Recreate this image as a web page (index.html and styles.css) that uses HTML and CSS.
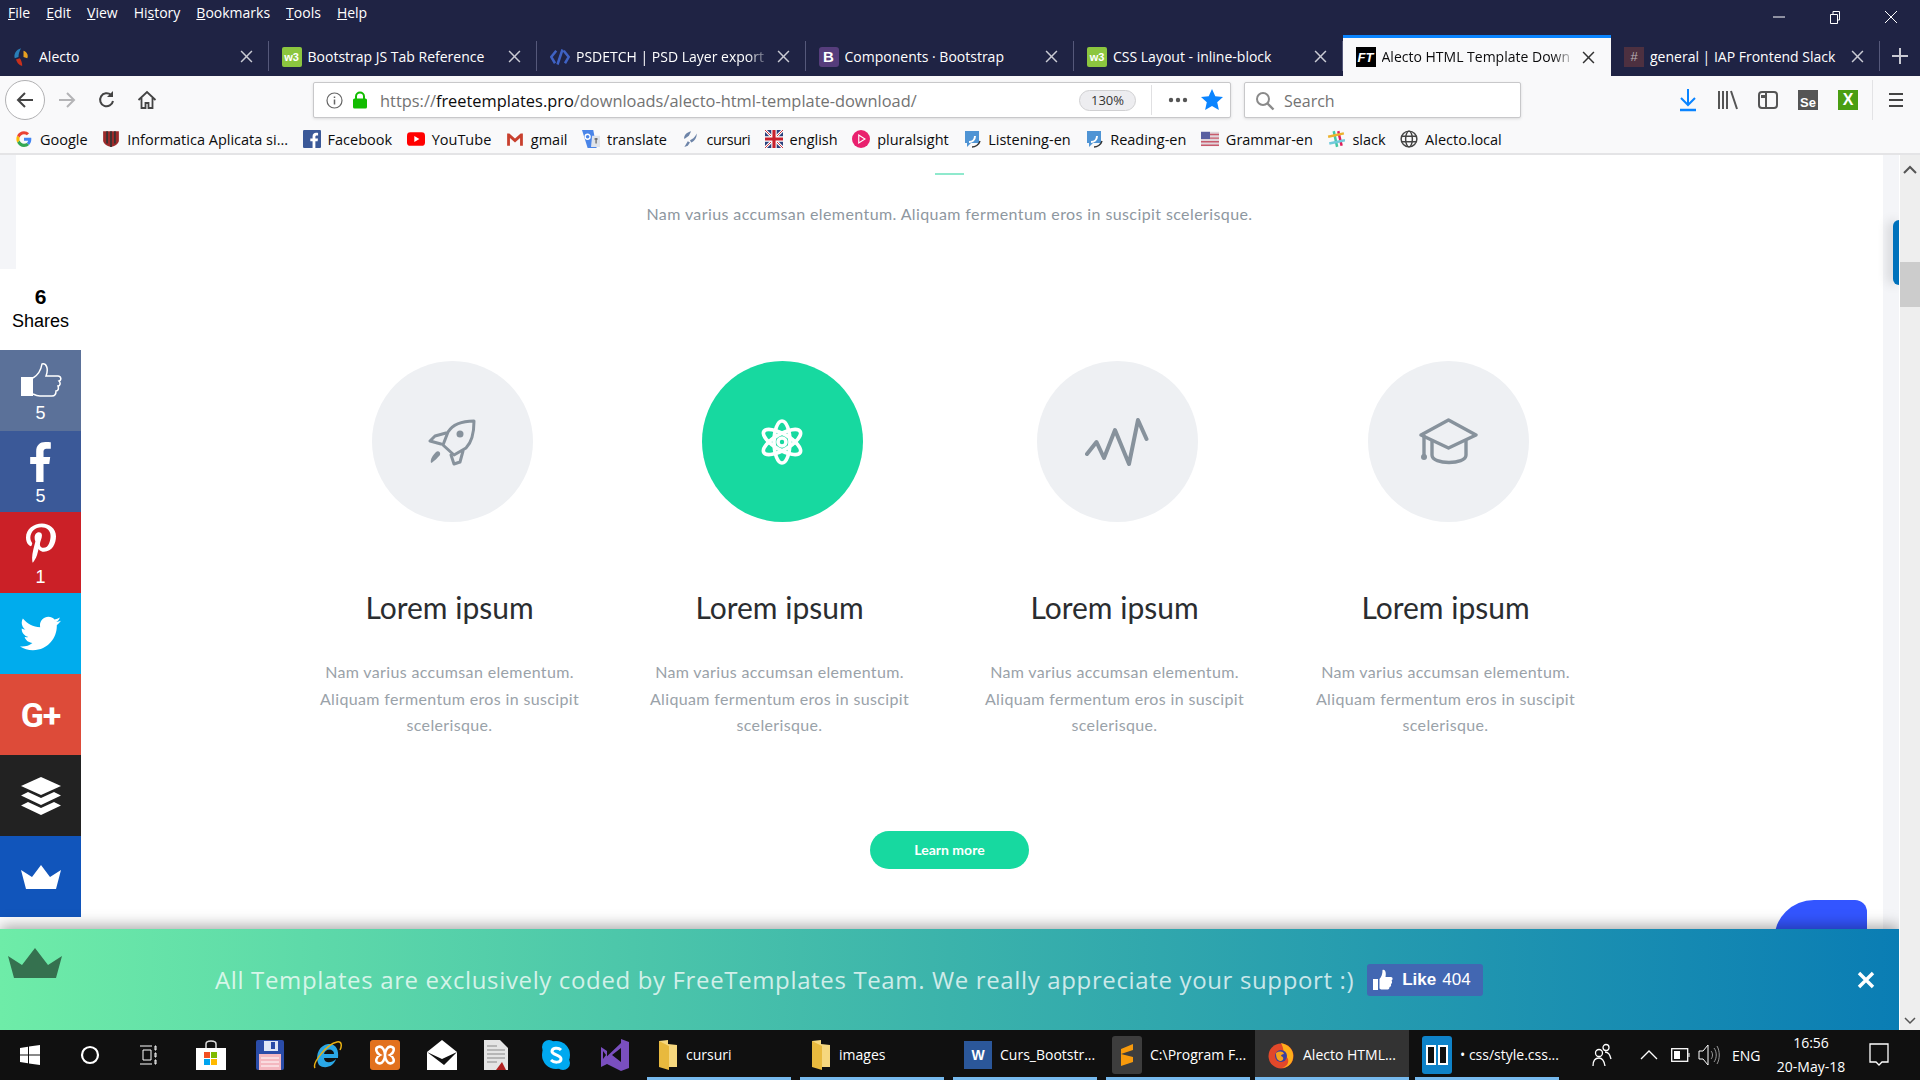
FILE: index.html
```html
<!DOCTYPE html>
<html lang="en">
<head>
    <meta charset="UTF-8">
    <title>Alecto HTML Template Download</title>
    <link rel="stylesheet" href="styles.css">
</head>
<body>
    <svg class="defs" width="0" height="0">
        <symbol id="x-icon" viewBox="0 0 12 12"><path d="M1 1l10 10M11 1L1 11" fill="none" stroke="currentColor" stroke-width="1.4"/></symbol>
        <symbol id="speech" viewBox="0 0 18 18"><path d="M2 1h14v12H8l-4 4v-4H2z" fill="#4f94d4"/><path d="M6 12c3 0 6-2 6-6" stroke="#fff" stroke-width="2" fill="none"/><path d="M9 17c3 0 7-2 8-6" stroke="#333" stroke-width="1.4" fill="none"/></symbol>
    </svg>

    <!-- menu bar -->
    <div class="menubar">
        <span class="menu-item"><u>F</u>ile</span>
        <span class="menu-item"><u>E</u>dit</span>
        <span class="menu-item"><u>V</u>iew</span>
        <span class="menu-item">Hi<u>s</u>tory</span>
        <span class="menu-item"><u>B</u>ookmarks</span>
        <span class="menu-item"><u>T</u>ools</span>
        <span class="menu-item"><u>H</u>elp</span>
        <div class="window-controls">
            <svg width="14" height="14" viewBox="0 0 14 14"><path d="M1 7h12" stroke="#fff"/></svg>
            <svg width="14" height="14" viewBox="0 0 14 14"><path d="M2.500 4.500h7v9h-7zM5 4V1.500h6.500V10H10" fill="none" stroke="#fff"/></svg>
            <svg width="14" height="14" viewBox="0 0 14 14"><path d="M1 1l12 12M13 1L1 13" stroke="#fff"/></svg>
        </div>
    </div>

    <!-- tabs -->
    <div class="tabstrip">
        <div class="tab">
            <svg class="favicon" viewBox="0 0 16 16"><path d="M8 1C4 2 2 6 3 9l3-1c0-3 1-5 2-7z" fill="#2a7fb8"/><path d="M10 3c3 1 4 4 3 6l-3-1c0-2 0-3 0-5z" fill="#e8a020"/><path d="M4 10c1 3 3 5 5 5 0-2-1-5-2-6z" fill="#c8301c"/></svg>
            <span class="tab-title">Alecto</span>
            <svg class="tab-close"><use href="#x-icon"/></svg>
        </div>
        <div class="tab">
            <span class="favicon favicon-w3">w3</span>
            <span class="tab-title">Bootstrap JS Tab Reference</span>
            <svg class="tab-close"><use href="#x-icon"/></svg>
        </div>
        <div class="tab">
            <svg class="favicon" viewBox="0 0 16 16"><path d="M5 3L1 8l3 5M11 3l4 5-3 5M10 2L6 14" fill="none" stroke="#3f62c4" stroke-width="2"/></svg>
            <span class="tab-title tab-title-fade">PSDETCH | PSD Layer export</span>
            <svg class="tab-close"><use href="#x-icon"/></svg>
        </div>
        <div class="tab">
            <span class="favicon favicon-b">B</span>
            <span class="tab-title">Components · Bootstrap</span>
            <svg class="tab-close"><use href="#x-icon"/></svg>
        </div>
        <div class="tab">
            <span class="favicon favicon-w3">w3</span>
            <span class="tab-title">CSS Layout - inline-block</span>
            <svg class="tab-close"><use href="#x-icon"/></svg>
        </div>
        <div class="tab tab-active">
            <span class="favicon favicon-ft">FT</span>
            <span class="tab-title tab-title-fade">Alecto HTML Template Down</span>
            <svg class="tab-close"><use href="#x-icon"/></svg>
        </div>
        <div class="tab">
            <span class="favicon favicon-hash">#</span>
            <span class="tab-title">general | IAP Frontend Slack</span>
            <svg class="tab-close"><use href="#x-icon"/></svg>
        </div>
        <div class="tab-new">
            <svg width="18" height="18" viewBox="0 0 18 18"><path d="M9 1v16M1 9h16" stroke="#c9cad3" stroke-width="2"/></svg>
        </div>
    </div>

    <!-- navigation toolbar -->
    <div class="toolbar">
        <div class="nav-btn nav-back">
            <svg width="20" height="20" viewBox="0 0 20 20"><path d="M18 10H3M10 3l-7 7 7 7" fill="none" stroke="#444" stroke-width="2"/></svg>
        </div>
        <div class="nav-btn">
            <svg width="20" height="20" viewBox="0 0 20 20"><path d="M2 10h15M10 3l7 7-7 7" fill="none" stroke="#b4b4b6" stroke-width="2"/></svg>
        </div>
        <div class="nav-btn">
            <svg width="20" height="20" viewBox="0 0 20 20"><path d="M16 11a6.500 6.500 0 1 1-2-6" fill="none" stroke="#444" stroke-width="2"/><path d="M16 1v6h-6z" fill="#444"/></svg>
        </div>
        <div class="nav-btn">
            <svg width="20" height="20" viewBox="0 0 20 20"><path d="M1.500 10L10 2l8.500 8M4.500 8v10h4v-5h3v5h4V8" fill="none" stroke="#444" stroke-width="1.800"/></svg>
        </div>

        <div class="urlbar">
            <svg class="url-info" width="17" height="17" viewBox="0 0 17 17"><circle cx="8.500" cy="8.500" r="7.500" fill="none" stroke="#666" stroke-width="1.200"/><path d="M8.500 7.500v5M8.500 4.500v1.500" stroke="#666" stroke-width="1.500"/></svg>
            <svg class="url-lock" width="16" height="18" viewBox="0 0 16 18"><path d="M4 8V5.500a4 4 0 0 1 8 0V8" fill="none" stroke="#12bc00" stroke-width="2"/><rect x="1" y="7.500" width="14" height="10" rx="1.500" fill="#12bc00"/></svg>
            <span class="url-text"><span class="url-dim">https://</span>freetemplates.pro<span class="url-dim">/downloads/alecto-html-template-download/</span></span>
            <span class="zoom-pill">130%</span>
            <span class="url-sep"></span>
            <svg class="url-dots" width="20" height="6" viewBox="0 0 20 6"><circle cx="3" cy="3" r="2.200" fill="#555"/><circle cx="10" cy="3" r="2.200" fill="#555"/><circle cx="17" cy="3" r="2.200" fill="#555"/></svg>
            <svg class="url-star" width="24" height="24" viewBox="0 0 24 24"><path d="M12 1l3.300 7.300 7.700.8-5.800 5.200 1.700 7.800-6.900-4-6.900 4 1.700-7.800L1 9.100l7.700-.8z" fill="#0a84ff"/></svg>
        </div>

        <div class="searchbar">
            <svg width="20" height="20" viewBox="0 0 20 20"><circle cx="8" cy="8" r="6" fill="none" stroke="#8a8a8a" stroke-width="2"/><path d="M12.500 12.500l6 6" stroke="#8a8a8a" stroke-width="2.400"/></svg>
            <span>Search</span>
        </div>

        <div class="tool-icons">
            <div class="nav-btn"><svg width="20" height="24" viewBox="0 0 20 24"><path d="M10 1v15M3 10l7 7 7-7" fill="none" stroke="#0a84ff" stroke-width="2"/><path d="M2 22h16" stroke="#0a84ff" stroke-width="2.500"/></svg></div>
            <div class="nav-btn"><svg width="22" height="20" viewBox="0 0 22 20"><path d="M2 1v18M6 1v18M10 1v18M14 1l6 18" fill="none" stroke="#555" stroke-width="2"/></svg></div>
            <div class="nav-btn"><svg width="20" height="20" viewBox="0 0 20 20"><rect x="1" y="2" width="18" height="16" rx="3" fill="none" stroke="#555" stroke-width="2"/><path d="M8 2v16" stroke="#555" stroke-width="2"/><path d="M3 5h4v3H3z" fill="#555"/></svg></div>
            <div class="nav-btn"><span class="ext-icon ext-se">Se</span></div>
            <div class="nav-btn"><span class="ext-icon ext-x">X</span></div>
            <span class="tool-sep"></span>
            <div class="nav-btn"><svg width="18" height="18" viewBox="0 0 18 18"><path d="M2 3h14M2 9h14M2 15h14" stroke="#444" stroke-width="2"/></svg></div>
        </div>
    </div>

    <!-- bookmarks -->
    <div class="bookmarks">
        <span class="bookmark">
            <svg viewBox="0 0 16 16"><path d="M14.500 8.200c0-.5 0-1-.1-1.400H8v2.700h3.700c-.2.9-.6 1.600-1.300 2.100l2.100 1.700c1.200-1.200 2-2.900 2-5.100z" fill="#4285f4"/><path d="M8 15c1.800 0 3.400-.6 4.500-1.700l-2.100-1.700c-.6.400-1.400.7-2.400.7-1.800 0-3.300-1.200-3.900-2.900L1.900 11c1.100 2.400 3.400 4 6.100 4z" fill="#34a853"/><path d="M4.100 9.400C3.900 8.600 3.900 7.400 4.100 6.600L1.900 4.900c-.9 1.900-.9 4.200 0 6.100z" fill="#fbbc05"/><path d="M8 3.700c1 0 1.900.4 2.600 1l1.900-1.900C11.300 1.700 9.800 1 8 1 5.300 1 3 2.600 1.900 4.900l2.200 1.700C4.700 4.900 6.200 3.700 8 3.700z" fill="#ea4335"/></svg>
            Google
        </span>
        <span class="bookmark">
            <svg viewBox="0 0 16 16"><path d="M1 1h14v8c0 3-3 5-7 6-4-1-7-3-7-6z" fill="#9c2a2a"/><path d="M4.500 1v11M8 1v14M11.500 1v11" stroke="#333" stroke-width="1.500"/></svg>
            Informatica Aplicata si...
        </span>
        <span class="bookmark">
            <svg viewBox="0 0 16 16"><rect width="16" height="16" rx="1" fill="#3b5998"/><path d="M11 16v-6h2l.3-2.500H11V6c0-.7.3-1.200 1.200-1.200h1.200V2.600C13 2.500 12.300 2.500 11.600 2.500 9.800 2.500 8.500 3.600 8.500 5.700v1.800h-2V10h2v6z" fill="#fff"/></svg>
            Facebook
        </span>
        <span class="bookmark">
            <svg viewBox="0 0 16 16"><rect y="2" width="16" height="12" rx="3" fill="#f00"/><path d="M6.500 5.300v5.400L11 8z" fill="#fff"/></svg>
            YouTube
        </span>
        <span class="bookmark">
            <svg viewBox="0 0 16 16"><path d="M1 3h2l5 4.500L13 3h2v11h-2.500V7L8 11 3.500 7v7H1z" fill="#c8402e"/></svg>
            gmail
        </span>
        <span class="bookmark">
            <svg viewBox="0 0 16 16"><path d="M0 0h10l3 16H5z" fill="#4a85e8"/><path d="M9 5h7v10H8z" fill="#dfe3ea"/><circle cx="5" cy="6" r="2.200" fill="none" stroke="#fff" stroke-width="1.200"/><path d="M11 8h3M12.500 7v5" stroke="#555"/></svg>
            translate
        </span>
        <span class="bookmark bookmark-tight">
            <svg viewBox="0 0 16 16"><path d="M9 1C5 2 2 5 3 8l4-3zM14 3c-2 4-4 5-6 6l1 2c3-1 5-4 5-8zM6 10l-3 5 3-1 2-3z" fill="#6d84a8"/></svg>
            cursuri
        </span>
        <span class="bookmark">
            <svg viewBox="0 0 20 20"><rect width="20" height="20" fill="#2a3f7c"/><path d="M0 0l20 20M20 0L0 20" stroke="#fff" stroke-width="3"/><path d="M0 0l20 20M20 0L0 20" stroke="#c8202c"/><path d="M10 0v20M0 10h20" stroke="#fff" stroke-width="6"/><path d="M10 0v20M0 10h20" stroke="#c8202c" stroke-width="3.500"/></svg>
            english
        </span>
        <span class="bookmark">
            <svg viewBox="0 0 16 16"><circle cx="8" cy="8" r="8" fill="#e9206e"/><path d="M6 4.500v7L11.500 8z" fill="none" stroke="#fff"/></svg>
            pluralsight
        </span>
        <span class="bookmark">
            <svg><use href="#speech"/></svg>
            Listening-en
        </span>
        <span class="bookmark">
            <svg><use href="#speech"/></svg>
            Reading-en
        </span>
        <span class="bookmark">
            <svg viewBox="0 0 20 16"><rect width="20" height="16" fill="#e0d4da"/><path d="M0 3h20M0 7h20M0 11h20M0 15h20" stroke="#c85a6c" stroke-width="1.600"/><rect width="10" height="8" fill="#5a5fa0"/></svg>
            Grammar-en
        </span>
        <span class="bookmark">
            <svg viewBox="0 0 16 16"><path d="M6 1l3 14" stroke="#44c7a4" stroke-width="2.200"/><path d="M10 1l3 13" stroke="#e01e5a" stroke-width="2.200"/><path d="M1 6l14-3" stroke="#ecb22e" stroke-width="2.200"/><path d="M2 12l14-3" stroke="#70cadb" stroke-width="2.200"/></svg>
            slack
        </span>
        <span class="bookmark">
            <svg viewBox="0 0 16 16"><g fill="none" stroke="#444" stroke-width="1.300"><circle cx="8" cy="8" r="7"/><ellipse cx="8" cy="8" rx="3" ry="7"/><path d="M1.500 5.500h13M1.500 10.500h13"/></g></svg>
            Alecto.local
        </span>
    </div>

    <div class="viewport">
        <div class="page">
            <div class="content">
                <div class="rule"></div>
                <p class="subtitle">Nam varius accumsan elementum. Aliquam fermentum eros in suscipit scelerisque.</p>

                <div class="features">
                    <div class="feature">
                        <div class="feature-icon">
                            <svg width="48" height="48" viewBox="0 0 48 48"><g fill="none" stroke="#87929c" stroke-width="3" stroke-linejoin="round" stroke-linecap="round"><path d="M46 3c0 13-2 21-8 27l-12 7-11-10 5-13C25 6 34 3 46 3z"/><path d="M18 15L7 18l-5 5 11 3"/><path d="M35 33l-3 11-6 2-3-9"/></g><circle cx="32" cy="16" r="3.500" fill="#87929c"/><path d="M8 34c2-2 5 0 4 3-2 2-6 7-9 8-1-4 2-8 5-11z" fill="#87929c"/></svg>
                        </div>
                        <h3 class="feature-title">Lorem ipsum</h3>
                        <p class="feature-text">Nam varius accumsan elementum. Aliquam fermentum eros in suscipit scelerisque.</p>
                    </div>
                    <div class="feature">
                        <div class="feature-icon feature-icon-active">
                            <svg width="48" height="48" viewBox="0 0 48 48"><g fill="none" stroke="#fff" stroke-width="3.600"><ellipse cx="24" cy="24" rx="8" ry="21"/><ellipse cx="24" cy="24" rx="8" ry="21" transform="rotate(60 24 24)"/><ellipse cx="24" cy="24" rx="8" ry="21" transform="rotate(120 24 24)"/><circle cx="24" cy="24" r="4"/></g></svg>
                        </div>
                        <h3 class="feature-title">Lorem ipsum</h3>
                        <p class="feature-text">Nam varius accumsan elementum. Aliquam fermentum eros in suscipit scelerisque.</p>
                    </div>
                    <div class="feature">
                        <div class="feature-icon">
                            <svg width="64" height="48" viewBox="0 0 64 48"><path d="M2 36l9.500-12L19 40l11-28 14 34 9-44 8.500 19" fill="none" stroke="#87929c" stroke-width="4" stroke-linejoin="round" stroke-linecap="round"/></svg>
                        </div>
                        <h3 class="feature-title">Lorem ipsum</h3>
                        <p class="feature-text">Nam varius accumsan elementum. Aliquam fermentum eros in suscipit scelerisque.</p>
                    </div>
                    <div class="feature">
                        <div class="feature-icon">
                            <svg width="60" height="48" viewBox="0 0 60 48"><g fill="none" stroke="#87929c" stroke-width="3.400" stroke-linejoin="round" stroke-linecap="round"><path d="M30.500 2L58 17 30.500 30 3 17z"/><path d="M14 23v14c0 10 34 10 34 0V23"/><path d="M6 18v19"/></g><circle cx="6" cy="39" r="3" fill="#87929c"/></svg>
                        </div>
                        <h3 class="feature-title">Lorem ipsum</h3>
                        <p class="feature-text">Nam varius accumsan elementum. Aliquam fermentum eros in suscipit scelerisque.</p>
                    </div>
                </div>

                <a class="learn-more">Learn more</a>
            </div>

            <!-- things fixed over the page -->
            <div class="edge-strip"></div>
            <div class="corner-strip"></div>
            <div class="edge-tab"></div>
            <div class="chat-blob"></div>

            <div class="share-bar">
                <div class="share-total"><b>6</b><span>Shares</span></div>
                <div class="share share-like">
                    <svg width="42" height="36" viewBox="0 0 42 36"><path d="M1 15h12v19H1z" fill="#fff"/><path d="M13 16c5-3 8-8 9-14 4-1 7 4 4 12h12c3 0 4 4 1 5 2 2 1 5-1 5 1 3 0 5-2 5 0 3-1 5-4 5H20c-3 0-5-1-7-2" fill="none" stroke="#fff" stroke-width="1.500"/></svg>
                    <span class="share-count">5</span>
                </div>
                <div class="share share-fb">
                    <svg width="21" height="40" viewBox="0 0 264 512"><path d="M76.700 512V283H0v-91h76.700v-71.700C76.700 42.400 124.300 0 193.800 0c33.300 0 61.900 2.500 70.200 3.600V85h-48.200c-37.800 0-45.100 18-45.100 44.300V192H256l-11.700 91h-73.600v229" fill="#fff"/></svg>
                    <span class="share-count">5</span>
                </div>
                <div class="share share-pin">
                    <svg width="32" height="40" viewBox="0 0 384 512"><path d="M204 6.500C101.400 6.500 0 74.900 0 185.600 0 256 39.600 296 63.600 296c9.900 0 15.600-27.600 15.600-35.400 0-9.300-23.700-29.100-23.700-67.800 0-80.400 61.200-137.400 140.400-137.400 68.100 0 118.500 38.700 118.500 109.800 0 53.100-21.300 152.700-90.300 152.700-24.900 0-46.200-18-46.200-43.800 0-37.800 26.400-74.400 26.400-113.400 0-66.200-93.900-54.200-93.900 25.800 0 16.800 2.100 35.400 9.600 50.700-13.800 59.400-42 147.900-42 209.100 0 18.900 2.700 37.500 4.500 56.400 3.400 3.800 1.700 3.400 6.900 1.500 50.400-69 48.600-82.500 71.400-172.800 12.300 23.400 44.100 36 69.300 36 106.200 0 153.900-103.500 153.900-196.800C384 71.300 298.200 6.500 204 6.500z" fill="#fff"/></svg>
                    <span class="share-count">1</span>
                </div>
                <div class="share share-tw share-plain">
                    <svg width="41" height="41" viewBox="0 0 512 512"><path d="M459.370 151.716c.325 4.548.325 9.097.325 13.645 0 138.720-105.583 298.558-298.558 298.558-59.452 0-114.680-17.219-161.137-47.106 8.447.974 16.568 1.299 25.340 1.299 49.055 0 94.213-16.568 130.274-44.832-46.132-.975-84.792-31.188-98.112-72.772 6.498.974 12.995 1.624 19.818 1.624 9.421 0 18.843-1.300 27.614-3.573-48.081-9.747-84.143-51.980-84.143-102.985v-1.299c13.969 7.797 30.214 12.670 47.431 13.319-28.264-18.843-46.781-51.005-46.781-87.391 0-19.492 5.197-37.360 14.294-52.954 51.655 63.675 129.300 105.258 216.365 109.807-1.624-7.797-2.599-15.918-2.599-24.040 0-57.828 46.782-104.934 104.934-104.934 30.213 0 57.502 12.670 76.670 33.137 23.715-4.548 46.456-13.320 66.599-25.340-7.798 24.366-24.366 44.833-46.132 57.827 21.117-2.273 41.584-8.122 60.426-16.243-14.292 20.791-32.161 39.308-52.628 54.253z" fill="#fff"/></svg>
                </div>
                <div class="share share-gp share-plain"><span class="gp-text">G+</span></div>
                <div class="share share-buffer share-plain">
                    <svg width="42" height="42" viewBox="0 0 42 42"><path d="M21 2l20 9-20 9-20-9z" fill="#fff"/><path d="M8 17l13 6 13-6 7 3.500L21 30 1 20.500z" fill="#fff"/><path d="M8 27l13 6 13-6 7 3.500L21 40 1 30.500z" fill="#fff"/></svg>
                </div>
                <div class="share share-crown share-plain">
                    <svg width="40" height="24" viewBox="0 0 40 24"><path d="M0 5l11 7L20 0l9 12 11-7-5 19H5z" fill="#fff"/></svg>
                </div>
            </div>

            <div class="banner">
                <svg class="banner-crown" width="54" height="30" viewBox="0 0 54 30"><path d="M0 8l14 9L27 0l13 17 14-9-6 22H6z" fill="#35714f"/></svg>
                <span class="banner-text">All Templates are exclusively coded by FreeTemplates Team. We really appreciate your support :)</span>
                <span class="like-btn">
                    <svg width="20" height="22" viewBox="0 0 20 22"><path d="M0 10h5v11H0zM6.500 10c2-2 3-5 3-9 2.500-1 4 2 3 7H18c2 0 2 3 .5 3.500 1 1.500.5 3-.5 3.500.5 2-.5 3-1.500 3 0 2-1 2.500-2.500 2.500H9c-1 0-2-.5-2.500-1z" fill="#fff"/></svg>
                    <b>Like</b> 404
                </span>
                <svg class="banner-close" width="18" height="18" viewBox="0 0 18 18"><path d="M2 2l14 14M16 2L2 16" stroke="#fff" stroke-width="3.400"/></svg>
            </div>
        </div>

        <div class="scrollbar">
            <svg width="14" height="9" viewBox="0 0 14 9"><path d="M1 8l6-6 6 6" fill="none" stroke="#555" stroke-width="2"/></svg>
            <div class="scroll-thumb"></div>
            <svg class="scroll-down" width="12" height="8" viewBox="0 0 12 8"><path d="M1 1l5 5 5-5" fill="none" stroke="#555" stroke-width="1.500"/></svg>
        </div>
    </div>

    <!-- windows taskbar -->
    <div class="taskbar">
        <div class="pinned">
            <div class="pin"><svg width="20" height="20" viewBox="0 0 20 20"><path d="M0 3l8-1.200V9.500H0zM9 1.600L20 0v9.500H9zM0 10.500h8v7.700L0 17zM9 10.500h11V20L9 18.400z" fill="#fff"/></svg></div>
            <div class="pin"><svg width="20" height="20" viewBox="0 0 20 20"><circle cx="10" cy="10" r="8" fill="none" stroke="#fff" stroke-width="2.200"/></svg></div>
            <div class="pin"><svg width="20" height="20" viewBox="0 0 20 20"><path d="M0 1h12M0 19h12M3 5h8v10H3zM15 1h1v4h-1zM15 8h1v4h-1zM15 15h1v4h-1z" fill="none" stroke="#fff"/></svg></div>
            <div class="pin"><svg width="30" height="30" viewBox="0 0 30 30"><path d="M10 8V4c0-4 10-4 10 0v4" fill="none" stroke="#ddd" stroke-width="1.500"/><rect y="8" width="30" height="22" fill="#fff"/><rect x="8" y="12" width="6" height="6" fill="#f25022"/><rect x="15" y="12" width="6" height="6" fill="#7fba00"/><rect x="8" y="19" width="6" height="6" fill="#00a4ef"/><rect x="15" y="19" width="6" height="6" fill="#ffb900"/></svg></div>
            <div class="pin"><svg width="28" height="30" viewBox="0 0 28 30"><rect width="28" height="30" rx="2" fill="#2a4ca8"/><rect x="8" y="1" width="14" height="10" fill="#dfe6f5"/><rect x="15" y="2" width="4" height="7" fill="#2a4ca8"/><rect x="3" y="14" width="22" height="16" fill="#f4b8c0"/><path d="M5 18h18M5 22h18M5 26h18" stroke="#fff"/></svg></div>
            <div class="pin"><svg width="30" height="32" viewBox="0 0 30 32"><path d="M5 24c-3-9 2-18 10-19 8-1 11 6 10 14H11c0 5 7 6 12 1-2 7-11 11-17 6" fill="#2aa7e6"/><path d="M11 15h10c0-6-9-6-10 0z" fill="#101010"/><path d="M2 29C-1 24 14 5 24 3c5-1 5 4 3 8" fill="none" stroke="#e8b013" stroke-width="1.500"/></svg></div>
            <div class="pin"><svg width="30" height="30" viewBox="0 0 30 30"><rect width="30" height="30" rx="3" fill="#e2711d"/><path d="M8 7c5-2 7 5 7 8s-2 10-7 8c-3-1-2-6 2-8-4-2-5-7-2-8zM22 7c-5-2-7 5-7 8s2 10 7 8c3-1 2-6-2-8 4-2 5-7 2-8z" fill="none" stroke="#fff" stroke-width="2.500"/></svg></div>
            <div class="pin"><svg width="30" height="30" viewBox="0 0 30 30"><path d="M0 12L15 0l15 12v18H0z" fill="#fff"/><path d="M0 12l15 7 15-7-13 13z" fill="#101010"/></svg></div>
            <div class="pin"><svg width="24" height="30" viewBox="0 0 24 30"><path d="M0 0h16l8 8v22H0z" fill="#e4e4e4"/><path d="M3 6h10M3 10h18M3 14h18M3 18h18M3 22h10" stroke="#888"/><path d="M12 30l6-8 4 8z" fill="#b02020"/></svg></div>
            <div class="pin"><svg width="30" height="32" viewBox="0 0 30 32"><circle cx="15" cy="16" r="14" fill="#00a9f0"/><circle cx="8" cy="8" r="7" fill="#00a9f0"/><circle cx="22" cy="24" r="7" fill="#00a9f0"/><path d="M20 11c-3-3-9-2-9 1.500S20 16 20 20s-7 4-10 1" fill="none" stroke="#fff" stroke-width="3"/></svg></div>
            <div class="pin"><svg width="30" height="32" viewBox="0 0 30 32"><path d="M22 0l8 3v26l-8 3-14-7-6 3V23l20-19z" fill="#7a4fbf"/><path d="M22 9v14l-9-7zM2 11l6 5-6 5z" fill="#101010"/><path d="M2 8l6 4v8l-6 4z" fill="#7a4fbf"/><path d="M4 12l3 4-3 4z" fill="#101010"/></svg></div>
        </div>

        <div class="apps">
            <div class="app"><svg width="20" height="30" viewBox="0 0 20 30"><path d="M1 1l9-1v4l9 1v22H1z" fill="#f6d77e"/><path d="M1 1l10 5v24L1 27z" fill="#e8b93e"/></svg><span>cursuri</span></div>
            <div class="app"><svg width="20" height="30" viewBox="0 0 20 30"><path d="M1 1l9-1v4l9 1v22H1z" fill="#f6d77e"/><path d="M1 1l10 5v24L1 27z" fill="#e8b93e"/></svg><span>images</span></div>
            <div class="app"><span class="app-word">W</span><span>Curs_Bootstr...</span></div>
            <div class="app app-narrow"><span class="app-sublime"><svg width="14" height="24" viewBox="0 0 14 24"><path d="M13 1v6L1 11V6zM1 11l12 3v5L1 23v-6z" fill="#f79a0c"/></svg></span><span>C:\Program F...</span></div>
            <div class="app app-active"><svg width="28" height="28" viewBox="0 0 28 28"><circle cx="14" cy="15" r="12.500" fill="#e2482a"/><path d="M14 2c9 2 13 8 12 15-1 7-7 10-12 10 6-1 8-5 7-9-1-3-4-4-6-3 3-3 1-9-1-13z" fill="#ffae1a"/><circle cx="14" cy="15" r="6" fill="#3b3f9e"/><path d="M9 12c3-2 7-2 8 1-2 0-3 1-3 2 3 1 3 4 0 5-3 0-5-2-5-8z" fill="#f7a21c"/></svg><span>Alecto HTML...</span></div>
            <div class="app"><span class="app-brackets"><i></i><i></i></span><span>• css/style.css...</span></div>
        </div>

        <div class="tray">
            <svg class="tray-people" width="20" height="24" viewBox="0 0 20 24"><g fill="none" stroke="#fff" stroke-width="1.300"><circle cx="7" cy="10" r="3.500"/><path d="M1 23c0-7 3-8 6-8s5 2 6 8"/><circle cx="14" cy="4.500" r="3"/><path d="M13 9c3 0 5 2 6 7"/></g></svg>
            <svg class="tray-caret" width="18" height="10" viewBox="0 0 18 10"><path d="M1 9l8-8 8 8" fill="none" stroke="#fff" stroke-width="1.300"/></svg>
            <svg class="tray-battery" width="19" height="14" viewBox="0 0 19 14"><rect x=".7" y=".7" width="16" height="12.600" fill="none" stroke="#fff" stroke-width="1.300"/><rect x="3" y="3" width="6" height="8" fill="#fff"/><path d="M18 5v4" stroke="#fff"/></svg>
            <svg class="tray-sound" width="22" height="24" viewBox="0 0 22 24"><path d="M1 8h4l5-6v20l-5-6H1z" fill="none" stroke="#fff"/><path d="M13 8c2 2 2 6 0 8M16 5c3 4 3 10 0 14M19 3c3 5 3 13 0 18" fill="none" stroke="#999"/></svg>
            <span class="tray-lang">ENG</span>
            <div class="tray-clock"><span>16:56</span><span>20-May-18</span></div>
            <svg class="tray-notify" width="20" height="24" viewBox="0 0 20 24"><path d="M1 1h18v18h-6l-3 3-3-3H1z" fill="none" stroke="#fff" stroke-width="1.300"/></svg>
        </div>
    </div>
</body>
</html>
```
FILE: styles.css
```css
* {
    box-sizing: border-box;
}

html, body {
    margin: 0;
    height: 100%;
}

body {
    display: flex;
    flex-direction: column;
    height: 1080px;
    overflow: hidden;
    font-family: "Open Sans", "Liberation Sans", sans-serif;
    background-color: #fff;
}

.defs {
    position: absolute;
}

/* menu bar */
.menubar {
    display: flex;
    height: 35px;
    padding: 3px 0 0 8px;
    gap: 16px;
    background-color: #1f2344;
    color: #fff;
    font-size: 14px;
    line-height: 20px;
}

.window-controls {
    display: flex;
    gap: 42px;
    margin-left: auto;
    padding: 7px 22px 0 0;
}

/* tabs */
.tabstrip {
    display: flex;
    height: 41px;
    background-color: #1f2344;
    color: #fff;
    font-size: 14px;
}

.tab {
    display: flex;
    align-items: center;
    width: 268.5px;
    padding: 2px 16px 0 13px;
    position: relative;
}

.tab::after {
    content: "";
    position: absolute;
    right: 0;
    top: 6px;
    bottom: 5px;
    width: 1px;
    background-color: #55587a;
}

.tab:first-child {
    padding-left: 11px;
}

.tab-active {
    padding-top: 0;
    background-color: #f9f9fa;
    border-top: 3px solid #0a84ff;
    color: #0c0c0d;
}

.tab-active::after {
    display: none;
}

.tab-active .tab-title {
    padding-bottom: 2px;
}

.favicon {
    flex: none;
    width: 20px;
    height: 20px;
    margin-right: 6px;
}

.tab:first-child .favicon {
    margin-right: 8px;
}

.favicon-w3, .favicon-b, .favicon-ft, .favicon-hash {
    display: flex;
    align-items: center;
    justify-content: center;
    font-family: "Liberation Sans", sans-serif;
    font-weight: bold;
    color: #fff;
}

.favicon-w3 {
    background-color: #8cc63f;
    border-radius: 2px;
    font-size: 11px;
}

.favicon-b {
    background-color: #563d7c;
    border-radius: 3px;
    font-size: 15px;
}

.favicon-ft {
    background-color: #000;
    font-size: 13px;
    font-style: italic;
}

.favicon-hash {
    background-color: #4d3040;
    color: #b9b0b5;
    font-weight: normal;
    font-size: 13px;
}

.tab-title {
    flex: 1;
    overflow: hidden;
    white-space: nowrap;
}

.tab-title-fade {
    -webkit-mask-image: linear-gradient(to right, #000 88%, transparent);
    mask-image: linear-gradient(to right, #000 88%, transparent);
}

.tab-close {
    flex: none;
    width: 13px;
    height: 13px;
    margin-left: 6px;
    color: #c9cad3;
}

.tab-active .tab-close {
    color: #333;
}

.tab-new {
    display: flex;
    align-items: center;
    justify-content: center;
    flex: 1;
}

/* toolbar */
.toolbar {
    display: flex;
    align-items: center;
    height: 48px;
    padding-left: 5px;
    background-color: #f9f9fa;
}

.nav-btn {
    display: flex;
    align-items: center;
    justify-content: center;
    width: 40px;
    height: 40px;
    flex: none;
}

.nav-back {
    margin-right: 1.5px;
    background-color: #fff;
    border: 1px solid #b1b1b3;
    border-radius: 50%;
}

.urlbar {
    display: flex;
    align-items: center;
    width: 918px;
    height: 36px;
    margin-left: 146.5px;
    background-color: #fff;
    border: 1px solid #c8c8ca;
    border-radius: 2px;
    box-shadow: 0 1px 3px rgba(0, 0, 0, 0.12);
    font-size: 16.4px;
}

.url-info {
    margin-left: 12px;
}

.url-lock {
    margin-left: 9px;
}

.url-text {
    margin-left: 12px;
    padding-top: 1px;
    flex: 1;
    color: #0c0c0d;
    white-space: nowrap;
}

.url-dim {
    color: #737373;
}

.zoom-pill {
    width: 57px;
    height: 21px;
    margin-right: 15px;
    background-color: #ededf0;
    border: 1px solid #d0d0d2;
    border-radius: 11px;
    font-size: 13px;
    line-height: 19px;
    text-align: center;
    color: #333;
}

.url-sep {
    width: 1px;
    height: 30px;
    background-color: #e0e0e2;
}

.url-dots {
    margin-left: 16px;
}

.url-star {
    margin: 0 6px 0 12px;
}

.searchbar {
    display: flex;
    align-items: center;
    gap: 9px;
    width: 277px;
    height: 36px;
    margin-left: 13px;
    padding: 1px 0 0 10px;
    background-color: #fff;
    border: 1px solid #c8c8ca;
    border-radius: 2px;
    box-shadow: 0 1px 3px rgba(0, 0, 0, 0.12);
    font-size: 16px;
    color: #737373;
}

.tool-icons {
    display: flex;
    align-items: center;
    margin-left: 147px;
}

.ext-icon {
    display: flex;
    align-items: flex-end;
    justify-content: center;
    width: 20px;
    height: 20px;
    font-family: "Liberation Sans", sans-serif;
    font-size: 13px;
    font-weight: bold;
    color: #fff;
}

.ext-se {
    background-color: #555;
}

.ext-x {
    align-items: center;
    background-color: #4a9e12;
    font-size: 16px;
}

.tool-sep {
    width: 1px;
    height: 40px;
    margin-left: 4px;
    background-color: #e3e3e5;
}

.nav-btn:last-child {
    margin-left: 3px;
}

/* bookmarks */
.bookmarks {
    display: flex;
    align-items: center;
    gap: 14.5px;
    height: 31px;
    padding: 1px 0 0 15px;
    background-color: #f9f9fa;
    border-bottom: 2px solid #e4e4e6;
    font-size: 14.5px;
    color: #0c0c0d;
}

.bookmark {
    display: flex;
    align-items: center;
    gap: 7px;
    white-space: nowrap;
}

.bookmark-tight {
    letter-spacing: -0.5px;
}

.bookmark svg {
    width: 18px;
    height: 18px;
    flex: none;
}

/* page area */
.viewport {
    display: flex;
    flex: 1;
    min-height: 0;
}

.page {
    flex: 1;
    position: relative;
    overflow: hidden;
    background-color: #fff;
}

.content {
    display: flex;
    flex-direction: column;
    align-items: center;
    padding-top: 18px;
    font-family: Lato, "Open Sans", sans-serif;
}

.rule {
    width: 29px;
    height: 2px;
    background-color: #8fe9cd;
}

.subtitle {
    margin: 26px 0 0;
    font-size: 16px;
    line-height: 26px;
    letter-spacing: 0.4px;
    color: #8e979f;
}

.features {
    display: grid;
    grid-template-columns: 330px 330px 340px 322px;
    margin-top: 134px;
    padding-right: 3px;
}

.feature {
    display: flex;
    flex-direction: column;
    align-items: center;
    text-align: center;
}

.feature-icon {
    display: flex;
    align-items: center;
    justify-content: center;
    width: 161px;
    height: 161px;
    border-radius: 50%;
    background-color: #eef0f3;
}

.feature-icon-active {
    background-color: #17d9a0;
}

.feature-title {
    margin: 67px 5px 0 0;
    font-size: 30px;
    line-height: 36px;
    font-weight: 400;
    color: #2a2d30;
}

.feature-text {
    width: 280px;
    margin: 34px 5px 0 0;
    font-size: 16px;
    line-height: 26.5px;
    letter-spacing: 0.35px;
    color: #9aa2a9;
}

.learn-more {
    display: block;
    width: 159px;
    height: 38px;
    margin-top: 92px;
    background-color: #17d9a0;
    border-radius: 19px;
    font-size: 14px;
    font-weight: bold;
    line-height: 38px;
    text-align: center;
    color: #fff;
}

/* overlays on the page */
.edge-strip {
    position: absolute;
    top: 0;
    right: 0;
    bottom: 0;
    width: 16px;
    background-color: #f4f5f8;
}

.corner-strip {
    position: absolute;
    top: 0;
    left: 0;
    width: 16px;
    height: 114px;
    background-color: #f4f5f8;
}

.edge-tab {
    position: absolute;
    top: 65px;
    right: 0;
    width: 6px;
    height: 65px;
    background-color: #0072bc;
    border-radius: 6px 0 0 6px;
    box-shadow: -4px 0 12px rgba(0, 0, 0, 0.2);
}

.chat-blob {
    position: absolute;
    top: 745px;
    left: 1774px;
    width: 93px;
    height: 40px;
    background-color: #3355ff;
    border-radius: 40px 12px 0 0 / 40px 12px 0 0;
}

.share-bar {
    position: absolute;
    top: 130px;
    left: 0;
    width: 81px;
    font-family: "Liberation Sans", sans-serif;
    color: #fff;
}

.share-total {
    display: flex;
    flex-direction: column;
    align-items: center;
    gap: 2px;
    height: 65px;
    padding-top: 1px;
    color: #000;
    font-size: 18px;
    line-height: 22px;
}

.share-total b {
    font-size: 21px;
}

.share {
    display: flex;
    flex-direction: column;
    align-items: center;
    height: 81px;
    padding-top: 12px;
}

.share-plain {
    justify-content: center;
    padding-top: 0;
}

.share-count {
    margin-top: 5px;
    font-size: 18px;
    line-height: 20px;
}

.share-like {
    background-color: #5b7199;
}

.share-fb {
    padding-top: 11px;
    background-color: #3b5998;
}

.share-pin {
    padding-top: 11px;
    background-color: #cb2027;
}

.share-fb .share-count, .share-pin .share-count {
    margin-top: 4px;
}

.share-tw {
    background-color: #00aced;
}

.share-gp {
    background-color: #dd4b39;
}

.share-buffer {
    background-color: #222;
}

.share-crown {
    background-color: #1155bb;
}

.gp-text {
    font-family: Roboto, sans-serif;
    font-size: 34px;
    font-weight: bold;
    letter-spacing: -1px;
}

.banner {
    position: absolute;
    left: 0;
    right: 0;
    bottom: 0;
    display: flex;
    align-items: center;
    height: 101px;
    padding: 0 24px 0 215px;
    background: linear-gradient(to right, #6eeca8, #3bb3ab 50%, #0a7db4);
    box-shadow: 0 -3px 14px rgba(0, 0, 0, 0.35);
    color: rgba(255, 255, 255, 0.75);
}

.banner-crown {
    position: absolute;
    left: 8px;
    top: 19px;
}

.banner-text {
    font-family: "Open Sans", sans-serif;
    font-size: 24px;
    letter-spacing: 0.64px;
    white-space: nowrap;
}

.like-btn {
    display: flex;
    align-items: center;
    gap: 6px;
    width: 116px;
    height: 32px;
    margin-left: 13px;
    padding-left: 6px;
    background-color: #4267b2;
    border-radius: 3px;
    font-family: "Liberation Sans", sans-serif;
    font-size: 17px;
    color: #fff;
}

.like-btn svg {
    margin-right: 3px;
}

.banner-close {
    margin-left: auto;
}

.scrollbar {
    display: flex;
    flex-direction: column;
    align-items: center;
    width: 21px;
    padding-top: 10px;
    background-color: #eee;
    border-left: 1px solid #fff;
    position: relative;
}

.scroll-thumb {
    width: 100%;
    height: 45px;
    margin-top: 88px;
    background-color: #ccc;
}

.scroll-down {
    margin-top: auto;
    margin-bottom: 5px;
}

/* taskbar */
.taskbar {
    display: flex;
    height: 50px;
    background-color: #101010;
    color: #fff;
    font-family: "Open Sans", sans-serif;
    font-size: 14px;
}

.pinned {
    display: grid;
    grid-template-columns: 60px 60px 60px 62px 56px 60px 54px 60px 48px 72px 44px;
    width: 647px;
}

.pin {
    display: flex;
    align-items: center;
    justify-content: center;
}

.apps {
    display: flex;
}

.app {
    display: flex;
    align-items: center;
    gap: 8px;
    width: 144px;
    margin-right: 9px;
    padding: 2px 0 0 11px;
    border-bottom: 3px solid #76b9ed;
    white-space: nowrap;
}

.app-narrow {
    margin-right: 5px;
}

.app-active {
    width: 154px;
    margin-right: 6px;
    padding-left: 12px;
    background-color: #333;
}

.app-word {
    display: flex;
    align-items: center;
    justify-content: center;
    width: 28px;
    height: 28px;
    background-color: #2b579a;
    font-family: "Liberation Sans", sans-serif;
    font-weight: bold;
}

.app-sublime {
    display: flex;
    align-items: center;
    justify-content: center;
    width: 30px;
    height: 38px;
    margin-left: -5px;
    background-color: #3d3d3d;
    border-radius: 3px;
}

.app-brackets {
    display: flex;
    justify-content: center;
    gap: 2px;
    width: 30px;
    height: 38px;
    padding: 9px 4px;
    margin-left: -4px;
    background-color: #0f83c9;
    border-radius: 3px;
}

.app-brackets i {
    flex: 1;
    background-color: #101010;
    border: 2px solid #fff;
}

.tray {
    display: flex;
    align-items: center;
    margin-left: auto;
    padding-right: 31px;
}

.tray-caret {
    margin-left: 28px;
}

.tray-battery {
    margin-left: 13px;
}

.tray-sound {
    margin-left: 8px;
}

.tray-lang {
    margin-left: 12.5px;
}

.tray-clock {
    display: flex;
    flex-direction: column;
    align-items: center;
    gap: 4px;
    width: 74px;
    margin-left: 13.5px;
    line-height: 20px;
}

.tray-notify {
    margin-left: 21px;
}
```
